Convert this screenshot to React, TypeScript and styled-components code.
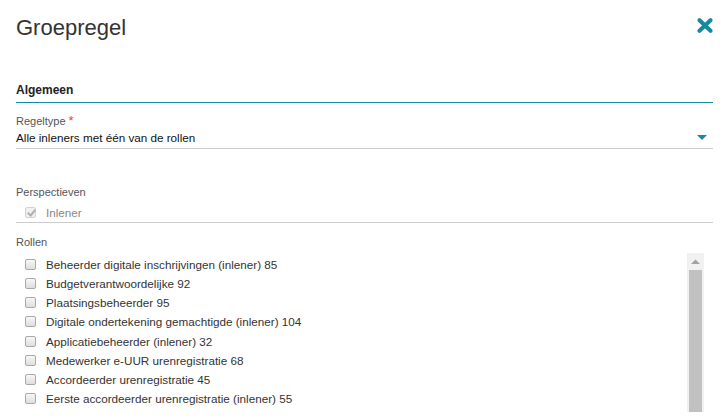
import styled, { createGlobalStyle } from "styled-components";

const TEAL = "#16889f";

const GlobalStyle = createGlobalStyle`
  html, body {
    margin: 0;
    padding: 0;
    background: #fff;
    overflow: hidden;
  }
  body {
    font-family: "Liberation Sans", Arial, sans-serif;
    color: #333;
  }
`;

const Page = styled.div`
  height: 419px;
  overflow: hidden;
  padding: 0 7px 0 16px;
`;

const Header = styled.header`
  display: flex;
  justify-content: space-between;
  align-items: flex-start;
  padding-top: 15px;
`;

const Title = styled.h1`
  margin: 0;
  font-size: 22px;
  line-height: 26px;
  font-weight: normal;
  color: #333;
`;

const CloseButton = styled.button`
  border: 0;
  background: none;
  padding: 0;
  margin-top: 3px;
  width: 16px;
  height: 16px;
  cursor: pointer;
  display: block;
`;

const SectionTitle = styled.h2`
  margin: 41px 0 0;
  padding-bottom: 4px;
  font-size: 12px;
  line-height: 16px;
  font-weight: bold;
  color: #222;
  border-bottom: 1px solid ${TEAL};
`;

const FieldLabel = styled.div<{ $gap: number }>`
  margin-top: ${({ $gap }) => $gap}px;
  height: 15px;
  font-size: 11px;
  line-height: 15px;
  color: #555;
`;

const Required = styled.span`
  color: #e0424b;
  font-size: 13px;
  line-height: 0;
  margin-left: 3px;
`;

const SelectBox = styled.div`
  display: flex;
  align-items: center;
  justify-content: space-between;
  font-size: 11.7px;
  line-height: 17px;
  color: #111;
  padding-bottom: 2px;
  border-bottom: 1px solid #ccc;
`;

const Caret = styled.span`
  width: 0;
  height: 0;
  margin-right: 6px;
  border-left: 5px solid transparent;
  border-right: 5px solid transparent;
  border-top: 5px solid ${TEAL};
`;

const CheckGroup = styled.div`
  margin-top: 4px;
  padding-bottom: 1px;
  border-bottom: 1px solid #ccc;
`;

const CheckRow = styled.label<{ $disabled?: boolean; $height: number }>`
  display: flex;
  align-items: center;
  gap: 10px;
  padding-left: 9px;
  height: ${({ $height }) => $height}px;
  flex: none;
  font-size: 11.7px;
  white-space: nowrap;
  color: ${({ $disabled }) => ($disabled ? "#888" : "#333")};
`;

const Box = styled.input`
  appearance: none;
  margin: 0;
  width: 11px;
  height: 11px;
  flex: none;
  border: 1px solid #a9a9a9;
  border-radius: 2px;
  background: linear-gradient(#f7f7f7, #dedede);
  position: relative;

  &:checked:disabled {
    border-color: #d2d2d2;
    background: #f0f0f0;
  }
  &:checked:disabled::after {
    content: "";
    position: absolute;
    left: 3px;
    top: 0px;
    width: 3px;
    height: 6px;
    border: solid #b0b0b0;
    border-width: 0 2px 2px 0;
    transform: rotate(40deg);
  }
`;

const ListFrame = styled.div`
  display: flex;
  margin: 3px 9px 0 0;
  height: 159px;
  overflow: hidden;
`;

const ListItems = styled.div`
  flex: 1;
  display: flex;
  flex-direction: column;
  padding-top: 2px;
  overflow: hidden;
`;

const ScrollTrack = styled.div`
  width: 17px;
  flex: none;
  display: flex;
  flex-direction: column;
  background: #f1f1f1;
`;

const ScrollArrow = styled.div`
  height: 17px;
  flex: none;
  display: flex;
  align-items: center;
  justify-content: center;
`;

const ScrollThumb = styled.div`
  flex: 1;
  margin: 0 2px;
  background: #c1c1c1;
`;

const roles = [
  "Beheerder digitale inschrijvingen (inlener) 85",
  "Budgetverantwoordelijke 92",
  "Plaatsingsbeheerder 95",
  "Digitale ondertekening gemachtigde (inlener) 104",
  "Applicatiebeheerder (inlener) 32",
  "Medewerker e-UUR urenregistratie 68",
  "Accordeerder urenregistratie 45",
  "Eerste accordeerder urenregistratie (inlener) 55",
];

function CloseIcon() {
  return (
    <svg width="16" height="15" viewBox="0 0 16 15">
      <path
        d="M2.5 2.2 L13.5 12.8 M13.5 2.2 L2.5 12.8"
        stroke={TEAL}
        strokeWidth="4"
        strokeLinecap="round"
      />
    </svg>
  );
}

function UpArrow() {
  return (
    <svg width="9" height="5" viewBox="0 0 9 5">
      <path d="M0 5 L4.5 0.5 L9 5 Z" fill="#a3a3a3" />
    </svg>
  );
}

export default function App() {
  return (
    <Page>
      <GlobalStyle />
      <Header>
        <Title>Groepregel</Title>
        <CloseButton type="button" aria-label="Sluiten">
          <CloseIcon />
        </CloseButton>
      </Header>

      <SectionTitle>Algemeen</SectionTitle>

      <FieldLabel $gap={11}>
        Regeltype<Required>*</Required>
      </FieldLabel>
      <SelectBox>
        <span>Alle inleners met één van de rollen</span>
        <Caret />
      </SelectBox>

      <FieldLabel $gap={36}>Perspectieven</FieldLabel>
      <CheckGroup>
        <CheckRow $disabled $height={17}>
          <Box type="checkbox" checked disabled readOnly />
          Inlener
        </CheckRow>
      </CheckGroup>

      <FieldLabel $gap={12}>Rollen</FieldLabel>
      <ListFrame>
        <ListItems>
          {roles.map((role) => (
            <CheckRow key={role} $height={19.14}>
              <Box type="checkbox" />
              {role}
            </CheckRow>
          ))}
        </ListItems>
        <ScrollTrack>
          <ScrollArrow>
            <UpArrow />
          </ScrollArrow>
          <ScrollThumb />
        </ScrollTrack>
      </ListFrame>
    </Page>
  );
}
